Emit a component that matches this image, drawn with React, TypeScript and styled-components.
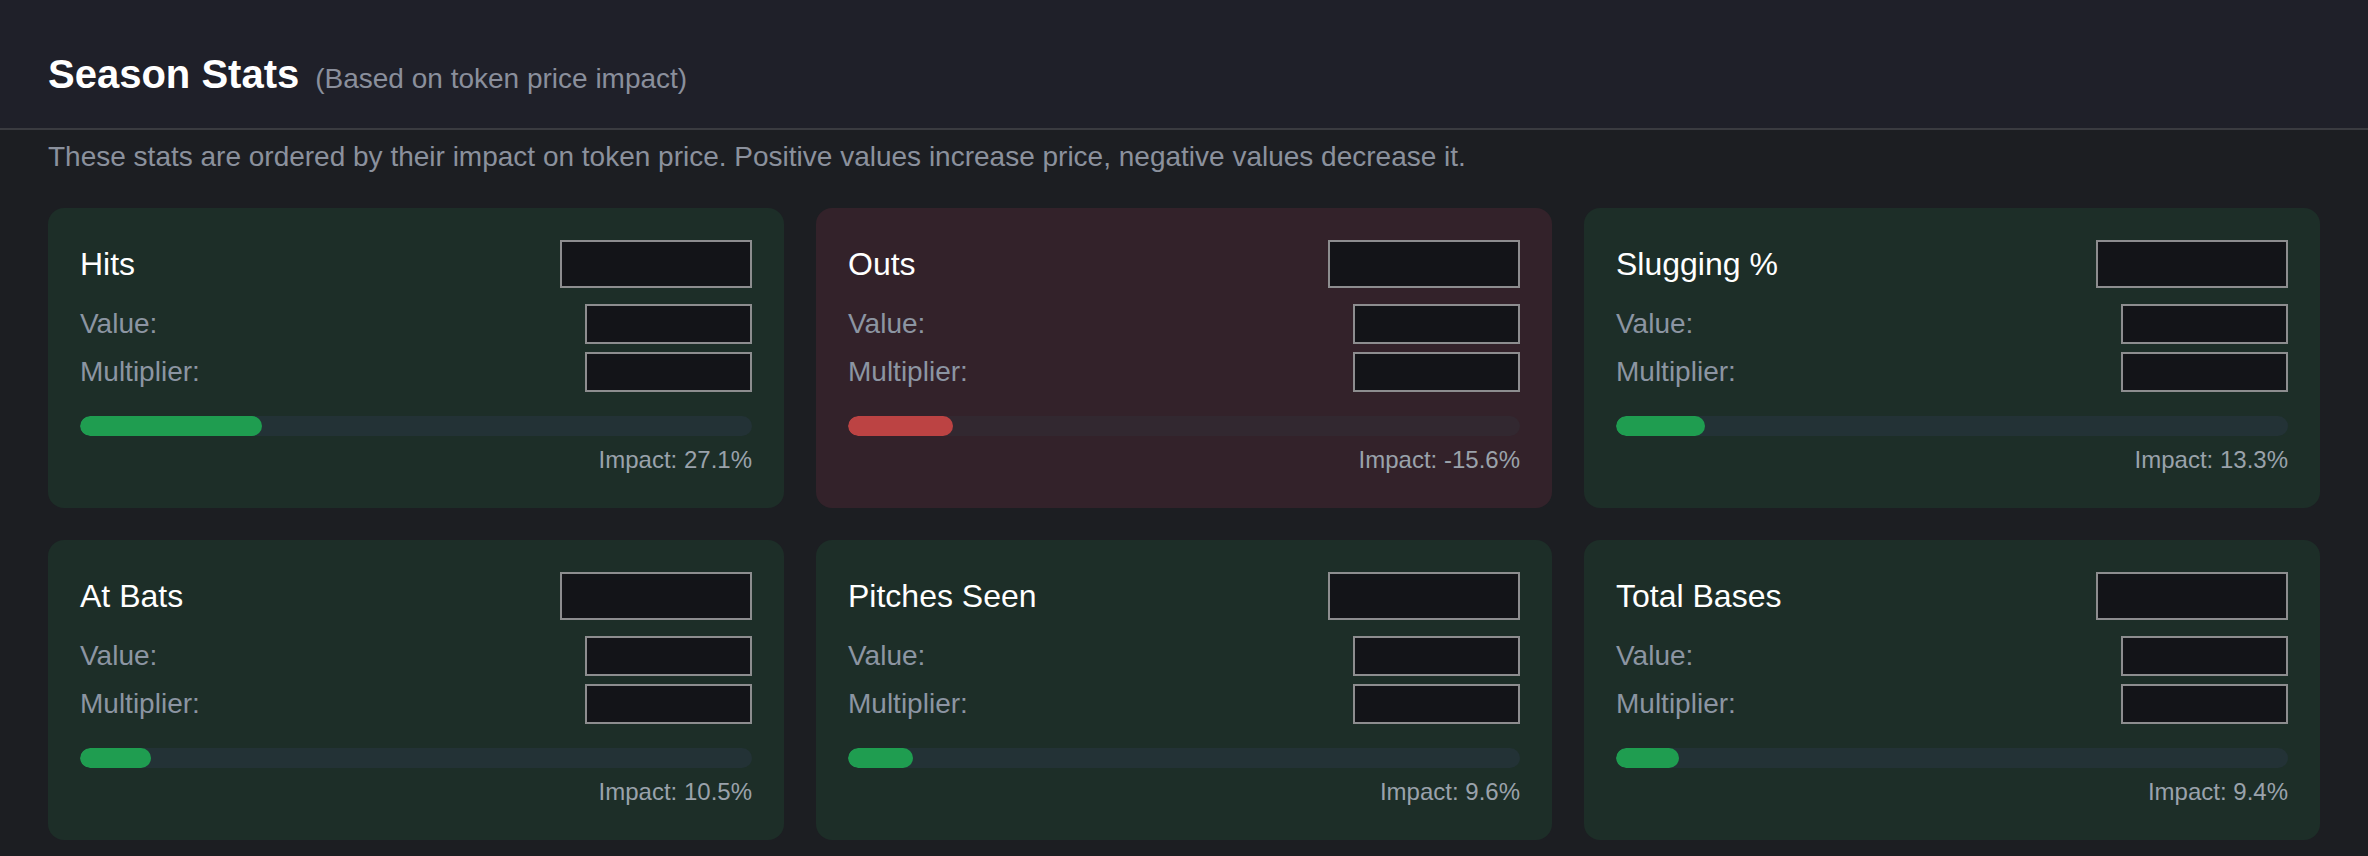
import React from "react";
import styled, { createGlobalStyle } from "styled-components";

type Tone = "up" | "down";

interface Stat {
  name: string;
  impact: number;
}

const stats: Stat[] = [
  { name: "Hits", impact: 27.1 },
  { name: "Outs", impact: -15.6 },
  { name: "Slugging %", impact: 13.3 },
  { name: "At Bats", impact: 10.5 },
  { name: "Pitches Seen", impact: 9.6 },
  { name: "Total Bases", impact: 9.4 },
];

const GlobalStyle = createGlobalStyle`
  html, body {
    margin: 0;
    padding: 0;
    background: #1c1e22;
    font-family: "Liberation Sans", Arial, Helvetica, sans-serif;
  }
  * {
    box-sizing: border-box;
  }
`;

const Page = styled.div`
  width: 100%;
  min-height: 856px;
  background: #1c1e22;
`;

const Header = styled.header`
  height: 130px;
  padding: 50px 48px 0;
  display: flex;
  align-items: baseline;
  background: #1f2029;
  border-bottom: 2px solid #3a3b40;
`;

const Title = styled.h2`
  margin: 0;
  font-size: 40px;
  line-height: 48px;
  font-weight: 700;
  color: #ffffff;
`;

const Subtitle = styled.span`
  margin-left: 16px;
  font-size: 28px;
  color: #8a8f9c;
`;

const Body = styled.div`
  padding: 0 48px;
`;

const Description = styled.p`
  margin: 6px 0 30px;
  font-size: 28px;
  line-height: 42px;
  color: #8b919d;
`;

const Grid = styled.div`
  display: grid;
  grid-template-columns: repeat(3, 1fr);
  gap: 32px;
`;

const Card = styled.div<{ $tone: Tone }>`
  height: 300px;
  padding: 32px;
  border-radius: 16px;
  background: ${(p) => (p.$tone === "up" ? "#1d2e28" : "#33222a")};
  display: flex;
  flex-direction: column;
`;

const TitleRow = styled.div`
  display: flex;
  align-items: center;
  justify-content: space-between;
`;

const Name = styled.h3`
  margin: 0;
  font-size: 32px;
  font-weight: 400;
  color: #ffffff;
`;

const Box = styled.input<{ $big?: boolean }>`
  width: ${(p) => (p.$big ? "192px" : "167px")};
  height: ${(p) => (p.$big ? "48px" : "40px")};
  padding: 0 8px;
  background: #131418;
  border: 2px solid #8d8d8f;
  border-radius: 0;
  color: #ffffff;
  font-family: inherit;
  font-size: 24px;
  outline: none;
`;

const Fields = styled.div`
  margin-top: 16px;
  display: flex;
  flex-direction: column;
  gap: 8px;
`;

const FieldRow = styled.div`
  display: flex;
  align-items: center;
  justify-content: space-between;
`;

const Label = styled.span`
  font-size: 28px;
  color: #8c95a2;
`;

const Track = styled.div<{ $tone: Tone }>`
  margin-top: 24px;
  height: 20px;
  border-radius: 10px;
  overflow: hidden;
  background: ${(p) => (p.$tone === "up" ? "#233236" : "#322830")};
`;

const Fill = styled.div<{ $tone: Tone }>`
  height: 100%;
  border-radius: 10px;
  background: ${(p) => (p.$tone === "up" ? "#1f9d50" : "#bc4343")};
`;

const Impact = styled.div`
  margin-top: 8px;
  font-size: 24px;
  line-height: 32px;
  text-align: right;
  color: #9aa2ab;
`;

const StatCard: React.FC<{ stat: Stat }> = ({ stat }) => {
  const tone: Tone = stat.impact >= 0 ? "up" : "down";
  return (
    <Card $tone={tone}>
      <TitleRow>
        <Name>{stat.name}</Name>
        <Box $big readOnly />
      </TitleRow>
      <Fields>
        <FieldRow>
          <Label>Value:</Label>
          <Box readOnly />
        </FieldRow>
        <FieldRow>
          <Label>Multiplier:</Label>
          <Box readOnly />
        </FieldRow>
      </Fields>
      <Track $tone={tone}>
        <Fill $tone={tone} style={{ width: `${Math.abs(stat.impact)}%` }} />
      </Track>
      <Impact>Impact: {stat.impact.toFixed(1)}%</Impact>
    </Card>
  );
};

const App: React.FC = () => {
  return (
    <>
      <GlobalStyle />
      <Page>
        <Header>
          <Title>Season Stats</Title>
          <Subtitle>(Based on token price impact)</Subtitle>
        </Header>
        <Body>
          <Description>
            These stats are ordered by their impact on token price. Positive
            values increase price, negative values decrease it.
          </Description>
          <Grid>
            {stats.map((s) => (
              <StatCard key={s.name} stat={s} />
            ))}
          </Grid>
        </Body>
      </Page>
    </>
  );
};

export default App;
